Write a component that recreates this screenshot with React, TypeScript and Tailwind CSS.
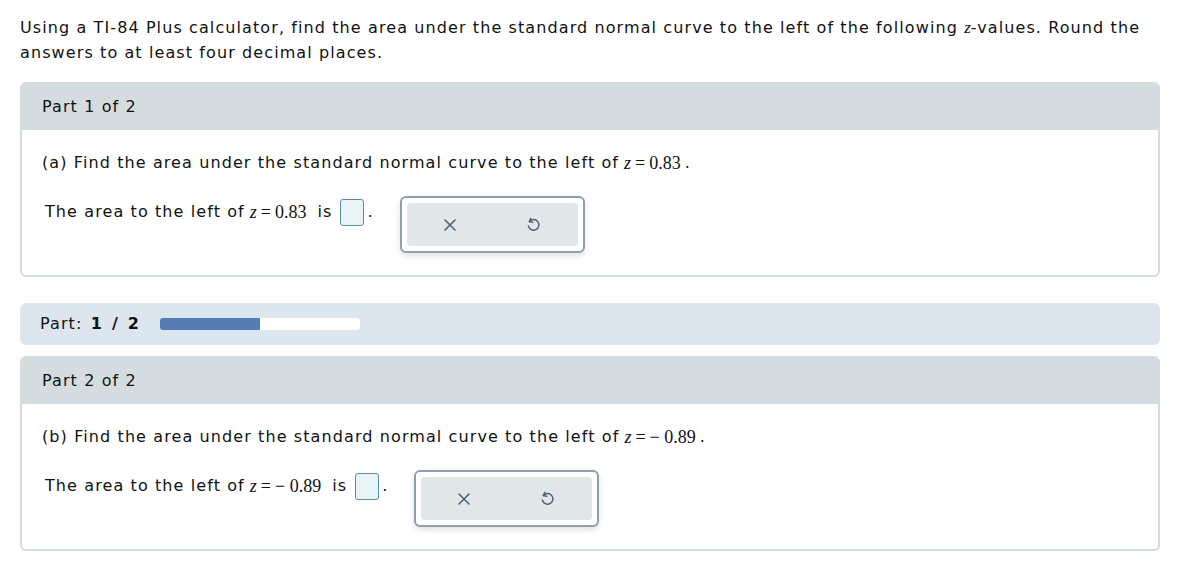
import React from "react";

const sans = { fontFamily: '"DejaVu Sans", Verdana, sans-serif' };

const Math: React.FC<{ value: string; wide?: boolean }> = ({ value, wide }) => (
  <span
    className={
      wide
        ? "font-['Liberation_Serif',serif] text-[18px] tracking-normal ml-[5px] mr-[11px]"
        : "font-['Liberation_Serif',serif] text-[18px] tracking-normal ml-[5px] mr-[4px]"
    }
  >
    <i>z</i>
    <span className="mx-[4px]">=</span>
    {value}
  </span>
);

const ActionBox: React.FC = () => (
  <div className="ml-[26px] mt-[-1px] w-[185px] h-[57px] rounded-md border-2 border-[#8ea1aa] bg-white p-[5px] shadow-[0_3px_6px_rgba(0,0,0,0.12)]">
    <div className="flex h-full items-center justify-between rounded bg-[#e1e6e9] px-[36px]">
      <svg width="14" height="14" viewBox="0 0 14 14" fill="none" stroke="#4e6470" strokeWidth="1.6" strokeLinecap="round">
        <path d="M2 2l10 10M12 2L2 12" />
      </svg>
      <svg width="17" height="17" viewBox="0 0 16 16" fill="none" stroke="#4e6470" strokeWidth="1.4" strokeLinecap="round" strokeLinejoin="round">
        <path d="M4.2 5.2A5 5 0 1 1 3.2 9.5" />
        <path d="M5.5 2.2L4 5.3l3.2.6" />
      </svg>
    </div>
  </div>
);

interface PartProps {
  label: string;
  letter: string;
  value: string;
}

const PartCard: React.FC<PartProps> = ({ label, letter, value }) => (
  <div className="rounded-md border-2 border-[#d5dcdf] bg-white">
    <div className="flex h-[46px] items-center bg-[#d5dcdf] px-5 text-[16px] tracking-[1.1px] text-[#111]">{label}</div>
    <div className="px-5 pt-[21px] pb-[22px] text-[16px] tracking-[1.1px] text-[#111]">
      <div className="flex items-center h-[24px]">
        ({letter}) Find the area under the standard normal curve to the left of <Math value={value} />.
      </div>
      <div className="mt-[22px] flex items-start pl-[3px]">
        <div className="flex items-center h-[30px]">
          The area to the left of <Math value={value} wide />is
          <span className="ml-[8px] inline-block h-[27px] w-[24px] rounded-[3px] border border-[#5b8c9c] bg-[#e9f4f7]" />
          <span className="ml-[3px]">.</span>
        </div>
        <ActionBox />
      </div>
    </div>
  </div>
);

export default function App() {
  return (
    <div className="min-h-[580px] bg-white px-5 pt-[15px]" style={sans}>
      <p className="text-[16px] tracking-[1.1px] leading-[25px] text-[#111] pr-[20px]">
        Using a TI-84 Plus calculator, find the area under the standard normal curve to the left of the following{" "}
        <i className="font-['Liberation_Serif',serif] text-[17px] tracking-normal">z</i>-values. Round the answers to at
        least four decimal places.
      </p>
      <div className="mt-[17px] pr-[8px]">
        <PartCard label="Part 1 of 2" letter="a" value="0.83" />
        <div className="mt-[26px] flex h-[42px] items-center rounded-md bg-[#dde6ef] px-5 text-[16px] tracking-[1.1px] text-[#111]">
          <span>
            Part: <b className="ml-[2px]">1<span className="mx-[9px]">/</span>2</b>
          </span>
          <div className="ml-5 flex h-[12px] w-[200px] overflow-hidden rounded-[3px] bg-white">
            <div className="h-full w-1/2 bg-[#557db4]" />
          </div>
        </div>
        <div className="mt-[11px]">
          <PartCard label="Part 2 of 2" letter="b" value="− 0.89" />
        </div>
      </div>
    </div>
  );
}
